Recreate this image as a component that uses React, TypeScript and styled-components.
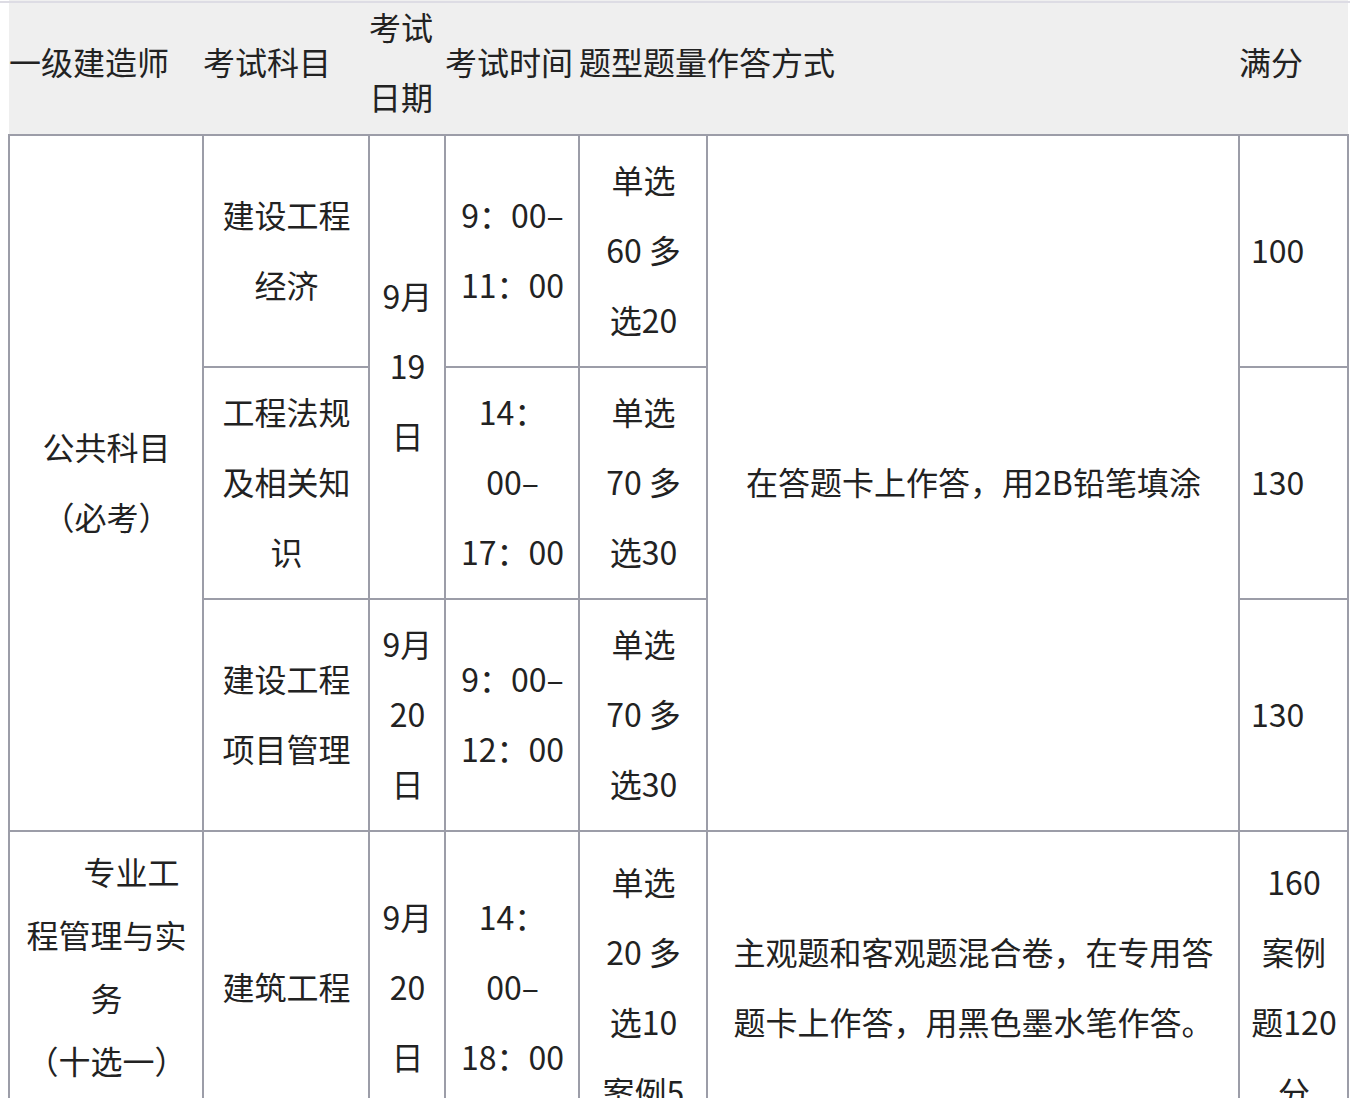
import React from "react";
import styled, { createGlobalStyle } from "styled-components";

const GlobalStyle = createGlobalStyle`
  html, body {
    margin: 0;
    padding: 0;
    background: #ffffff;
    overflow: hidden;
  }
  body {
    font-family: "Noto Sans CJK SC", "Noto Sans", sans-serif;
    color: #222222;
  }
`;

const Page = styled.div`
  padding: 0 2px 0 8px;
`;

const TopRule = styled.div`
  position: fixed;
  top: 1px;
  left: 0;
  right: 0;
  height: 2px;
  background: #dddce4;
  z-index: 2;
`;

const Table = styled.table`
  margin-top: -9px;
  width: 1341px;
  table-layout: fixed;
  border-collapse: collapse;
  font-size: 32px;
`;

const Col = styled.col<{ $w: number }>`
  width: ${(p) => p.$w}px;
`;

const HeadRow = styled.tr`
  background: #efefef;
`;

const HeadCell = styled.th`
  padding: 0 0 3px 0;
  font-weight: 400;
  text-align: left;
  vertical-align: middle;
  line-height: 70px;
  white-space: nowrap;
  color: #222222;
`;

const Cell = styled.td<{ $align?: "left" | "center"; $lh?: number; $pb?: number; $indent?: number }>`
  border: 2px solid #9c9da8;
  padding: 8px 10px ${(p) => (p.$pb ?? 12)}px 11px;
  text-align: ${(p) => p.$align ?? "center"};
  vertical-align: middle;
  line-height: ${(p) => p.$lh ?? 70}px;
  white-space: nowrap;
  text-indent: ${(p) => p.$indent ?? 0}px;
  color: #222222;
`;

export default function App() {
  return (
    <>
      <GlobalStyle />
      <TopRule />
      <Page>
        <Table>
          <colgroup>
            <Col $w={194} />
            <Col $w={166} />
            <Col $w={76} />
            <Col $w={134} />
            <Col $w={128} />
            <Col $w={532} />
            <Col $w={109} />
          </colgroup>
          <thead>
            <HeadRow>
              <HeadCell>一级建造师</HeadCell>
              <HeadCell>考试科目</HeadCell>
              <HeadCell>
                考试
                <br />
                日期
              </HeadCell>
              <HeadCell>考试时间</HeadCell>
              <HeadCell>题型题量</HeadCell>
              <HeadCell>作答方式</HeadCell>
              <HeadCell>满分</HeadCell>
            </HeadRow>
          </thead>
          <tbody>
            <tr>
              <Cell rowSpan={3}>
                公共科目
                <br />
                （必考）
              </Cell>
              <Cell>
                建设工程
                <br />
                经济
              </Cell>
              <Cell rowSpan={2}>
                9月
                <br />
                19
                <br />日
              </Cell>
              <Cell>
                9：00–
                <br />
                11：00
              </Cell>
              <Cell>
                单选
                <br />
                60 多
                <br />
                选20
              </Cell>
              <Cell rowSpan={3}>在答题卡上作答，用2B铅笔填涂</Cell>
              <Cell $align="left">100</Cell>
            </tr>
            <tr>
              <Cell>
                工程法规
                <br />
                及相关知
                <br />识
              </Cell>
              <Cell>
                14：
                <br />
                00–
                <br />
                17：00
              </Cell>
              <Cell>
                单选
                <br />
                70 多
                <br />
                选30
              </Cell>
              <Cell $align="left">130</Cell>
            </tr>
            <tr>
              <Cell>
                建设工程
                <br />
                项目管理
              </Cell>
              <Cell>
                9月
                <br />
                20
                <br />日
              </Cell>
              <Cell>
                9：00–
                <br />
                12：00
              </Cell>
              <Cell>
                单选
                <br />
                70 多
                <br />
                选30
              </Cell>
              <Cell $align="left">130</Cell>
            </tr>
            <tr>
              <Cell $lh={63} $pb={52} $indent={50}>
                专业工
                <br />
                程管理与实
                <br />务
                <br />
                （十选一）
              </Cell>
              <Cell>建筑工程</Cell>
              <Cell>
                9月
                <br />
                20
                <br />日
              </Cell>
              <Cell>
                14：
                <br />
                00–
                <br />
                18：00
              </Cell>
              <Cell>
                单选
                <br />
                20 多
                <br />
                选10
                <br />
                案例5
              </Cell>
              <Cell>
                主观题和客观题混合卷，在专用答
                <br />
                题卡上作答，用黑色墨水笔作答。
              </Cell>
              <Cell>
                160
                <br />
                案例
                <br />
                题120
                <br />分
              </Cell>
            </tr>
          </tbody>
        </Table>
      </Page>
    </>
  );
}
